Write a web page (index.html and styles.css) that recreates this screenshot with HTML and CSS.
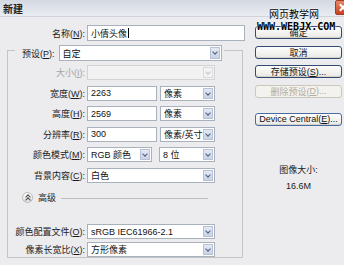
FILE: index.html
```html
<!DOCTYPE html>
<html lang="zh">
<head>
    <meta charset="UTF-8">
    <title>新建</title>
    <link rel="stylesheet" href="styles.css">
</head>
<body>

    <div class="dialog">
        <div class="titlebar">
            <span class="title">新建</span>
            <span class="close"></span>
        </div>

        <div class="content">
            <div class="main">
                <div class="row name-row">
                    <label>名称(<u>N</u>):</label>
                    <div class="field name-field">小倩头像<span class="caret"></span></div>
                </div>

                <fieldset class="group">
                    <legend>
                        <label>预设(<u>P</u>):</label>
                        <div class="field select preset">自定<span class="arrow"></span></div>
                    </legend>

                    <div class="row frow first disabled">
                        <label>大小(<u>I</u>):</label>
                        <div class="field select full"><span class="arrow"></span></div>
                    </div>
                    <div class="row frow">
                        <label>宽度(<u>W</u>):</label>
                        <div class="field num">2263</div>
                        <div class="field select unit">像素<span class="arrow"></span></div>
                    </div>
                    <div class="row frow">
                        <label>高度(<u>H</u>):</label>
                        <div class="field num">2569</div>
                        <div class="field select unit">像素<span class="arrow"></span></div>
                    </div>
                    <div class="row frow">
                        <label>分辨率(<u>R</u>):</label>
                        <div class="field num">300</div>
                        <div class="field select unit">像素/英寸<span class="arrow"></span></div>
                    </div>
                    <div class="row frow">
                        <label>颜色模式(<u>M</u>):</label>
                        <div class="field select mode">RGB 颜色<span class="arrow"></span></div>
                        <div class="field select bits">8 位<span class="arrow"></span></div>
                    </div>
                    <div class="row frow">
                        <label>背景内容(<u>C</u>):</label>
                        <div class="field select full">白色<span class="arrow"></span></div>
                    </div>

                    <div class="advanced">
                        <span class="toggle"></span>
                        <span class="adv-label">高级</span>
                        <span class="rule"></span>
                    </div>

                    <div class="row frow adv-first">
                        <label>颜色配置文件(<u>O</u>):</label>
                        <div class="field select full">sRGB IEC61966-2.1<span class="arrow"></span></div>
                    </div>
                    <div class="row frow adv-second">
                        <label>像素长宽比(<u>X</u>):</label>
                        <div class="field select full">方形像素<span class="arrow"></span></div>
                    </div>
                </fieldset>
            </div>

            <div class="side">
                <div class="btn">确定</div>
                <div class="btn">取消</div>
                <div class="btn">存储预设(<u>S</u>)...</div>
                <div class="btn off">删除预设(<u>D</u>)...</div>
                <div class="btn device">Device Central(<u>E</u>)...</div>

                <div class="info">
                    <div>图像大小:</div>
                    <div>16.6M</div>
                </div>
            </div>
        </div>

        <!-- site watermark over the OK button -->
        <div class="watermark">
            <div class="wm-cn">网页教学网</div>
            <div class="wm-en">WWW.WEBJX.COM</div>
        </div>
    </div>

</body>
</html>
```

FILE: styles.css
```css
* {
    box-sizing: border-box;
}
body {
    margin: 0;
    background-color: #ecebee;
    font-family: "Liberation Sans", "Noto Sans CJK SC", sans-serif;
    font-size: 9px;
    color: #1b1b1b;
}
.dialog {
    position: relative;
    width: 344px;
    height: 265px;
    overflow: hidden;
    background-color: #ecebee;
}
.titlebar {
    height: 17px;
    display: flex;
    justify-content: space-between;
    align-items: center;
    padding-left: 3px;
    background: linear-gradient(#d3d8e2, #e9ecf1);
    border-bottom: 1px solid #cfd3db;
}
.title {
    font-weight: bold;
    font-size: 10px;
    color: #222;
}
.close {
    align-self: flex-start;
    position: relative;
    width: 15px;
    height: 15px;
    margin-right: -6px;
    border-radius: 2px;
    background: linear-gradient(#e8866a, #c9401f);
    border: 1px solid #a83a22;
}
.close::before, .close::after {
    content: "";
    position: absolute;
    left: 6px;
    top: 2px;
    width: 2px;
    height: 9px;
    background-color: #fff;
    transform: rotate(45deg);
}
.close::after {
    transform: rotate(-45deg);
}
.content {
    display: flex;
}
.main {
    width: 245px;
}
.row {
    display: flex;
    align-items: center;
}
.row label {
    text-align: right;
    margin-right: 2px;
    white-space: nowrap;
}
.name-row {
    margin-top: 8px;
    height: 16px;
}
.name-row label {
    width: 85px;
}
.field {
    position: relative;
    height: 100%;
    display: flex;
    align-items: center;
    padding-left: 3px;
    background-color: #fff;
    border: 1px solid #a9b1bc;
    color: #111;
    white-space: nowrap;
}
.name-field {
    width: 158px;
}
.caret {
    width: 1px;
    height: 10px;
    margin-left: 1px;
    background-color: #000;
}
.arrow {
    position: absolute;
    right: 1px;
    top: 1px;
    bottom: 1px;
    width: 10px;
    background: linear-gradient(#e4e9f3, #c9d3e4);
    border: 1px solid #b7c2d6;
}
.arrow::after {
    content: "";
    position: absolute;
    left: 2px;
    top: 2px;
    width: 3px;
    height: 3px;
    border-right: 1.5px solid #4a5d80;
    border-bottom: 1.5px solid #4a5d80;
    transform: rotate(45deg);
}
.group {
    margin: -2px 0 0 7px;
    width: 236px;
    min-width: 0;
    padding: 0;
    border: 1px solid #c4c4c4;
}
.group legend {
    margin-left: 7px;
    padding: 6px 2px 0 7px;
    display: flex;
    align-items: center;
}
.group legend label {
    margin-right: 4px;
    white-space: nowrap;
}
.preset {
    width: 163px;
    height: 16px;
}
.frow {
    height: 15px;
    margin-top: 5.5px;
}
.frow label {
    width: 77px;
}
.frow.first {
    margin-top: 4px;
}
.full {
    width: 128px;
}
.num {
    width: 70px;
    margin-right: 3px;
}
.unit {
    width: 55px;
}
.mode {
    width: 65px;
    margin-right: 7px;
}
.bits {
    width: 56px;
}
.disabled label {
    color: #a4a4a4;
}
.disabled .field {
    background-color: #f2f2f2;
    border-color: #d3d3d3;
}
.disabled .arrow {
    background: #f3f3f3;
    border-color: #dadada;
}
.disabled .arrow::after {
    border-color: #c2c2c2;
}
.advanced {
    display: flex;
    align-items: center;
    height: 12px;
    margin-top: 8.5px;
    padding-left: 14px;
}
.toggle {
    position: relative;
    width: 11px;
    height: 11px;
    border-radius: 50%;
    border: 1px solid #b9b9b9;
    background: linear-gradient(#fff, #e2e2e2);
}
.toggle::before, .toggle::after {
    content: "";
    position: absolute;
    left: 3px;
    width: 3px;
    height: 3px;
    border-left: 1px solid #444;
    border-top: 1px solid #444;
    transform: rotate(45deg);
}
.toggle::before {
    top: 2px;
}
.toggle::after {
    top: 5px;
}
.adv-label {
    margin-left: 5px;
}
.rule {
    flex: 1;
    height: 0;
    margin: 2px 34px 0 5px;
    border-top: 1px solid #bdbdbd;
}
.frow.adv-first {
    margin-top: 21px;
}
.frow.adv-second {
    margin-top: 3px;
}
.side {
    width: 87px;
    margin-left: 10px;
    padding-top: 9px;
}
.btn {
    height: 13px;
    margin-bottom: 6.5px;
    display: flex;
    justify-content: center;
    align-items: center;
    border: 1px solid #334a70;
    border-radius: 3px;
    background: linear-gradient(#fefefe, #e9e8e3);
    box-shadow: inset 0 -1px 0 #d4d2c8;
    color: #111;
    white-space: nowrap;
}
.btn.off {
    border-color: #cac8bd;
    background: #f3f2ee;
    box-shadow: none;
    color: #b0ad9f;
}
.btn.device {
    margin-top: 15px;
    border-color: #4a6aa3;
}
.info {
    margin-top: 36px;
    text-align: center;
    line-height: 16px;
    color: #222;
}
.watermark {
    position: absolute;
    left: 257px;
    top: 8px;
    color: #000;
    text-shadow: 0 0 2px #fff, 0 0 2px #fff;
}
.wm-cn {
    margin-left: 12px;
    font-size: 10px;
    line-height: 13px;
}
.wm-en {
    font-family: "DejaVu Sans Mono", monospace;
    font-weight: bold;
    font-size: 10px;
    line-height: 11px;
}
```
